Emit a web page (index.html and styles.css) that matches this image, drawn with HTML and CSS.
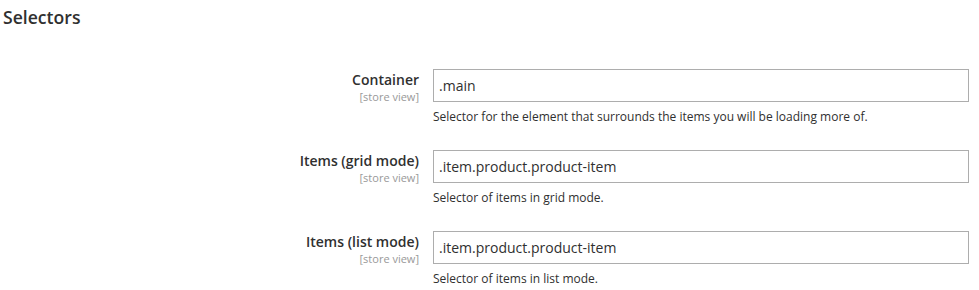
FILE: index.html
```html
<!DOCTYPE html>
<html lang="en">
<head>
    <meta charset="UTF-8">
    <title>Selectors</title>
    <link rel="stylesheet" href="styles.css">
</head>
<body>
    <div class="section">
        <h2 class="section-title">Selectors</h2>

        <div class="fieldset">
            <div class="field-row">
                <div class="field-label">
                    <label>Container</label>
                    <span class="scope">[store view]</span>
                </div>
                <div class="field-value">
                    <input type="text" class="input-text" value=".main">
                    <p class="note">Selector for the element that surrounds the items you will be loading more of.</p>
                </div>
            </div>

            <div class="field-row">
                <div class="field-label">
                    <label>Items (grid mode)</label>
                    <span class="scope">[store view]</span>
                </div>
                <div class="field-value">
                    <input type="text" class="input-text" value=".item.product.product-item">
                    <p class="note">Selector of items in grid mode.</p>
                </div>
            </div>

            <div class="field-row">
                <div class="field-label">
                    <label>Items (list mode)</label>
                    <span class="scope">[store view]</span>
                </div>
                <div class="field-value">
                    <input type="text" class="input-text" value=".item.product.product-item">
                    <p class="note">Selector of items in list mode.</p>
                </div>
            </div>
        </div>
    </div>
</body>
</html>
```

FILE: styles.css
```css
body {
    margin: 0;
    background: #fff;
    font-family: 'Open Sans', 'Liberation Sans', sans-serif;
    color: #303030;
}

.section-title {
    margin: 0;
    padding: 7px 3px;
    font-size: 17.6px;
    line-height: 20px;
    font-weight: 600;
    color: #303030;
}

.fieldset {
    margin-top: 35px;
    display: flex;
    flex-direction: column;
    gap: 25px;
}

.field-row {
    display: grid;
    grid-template-columns: 433px 536px;
}

.field-label {
    padding: 1px 14px 0 0;
    text-align: right;
    display: flex;
    flex-direction: column;
    align-items: flex-end;
}

.field-label label {
    font-size: 14px;
    line-height: 19px;
    font-weight: 600;
    color: #303030;
}

.scope {
    margin-top: 1px;
    font-size: 11px;
    line-height: 14px;
    color: #999;
}

.input-text {
    box-sizing: border-box;
    display: block;
    width: 536px;
    height: 33px;
    margin: 0;
    padding: 0 5px;
    border: 1px solid #adadad;
    border-radius: 0;
    font-family: inherit;
    font-size: 14px;
    color: #303030;
    outline: none;
}

.note {
    margin: 7px 0 0;
    font-size: 12px;
    line-height: 16px;
    color: #303030;
}
```
